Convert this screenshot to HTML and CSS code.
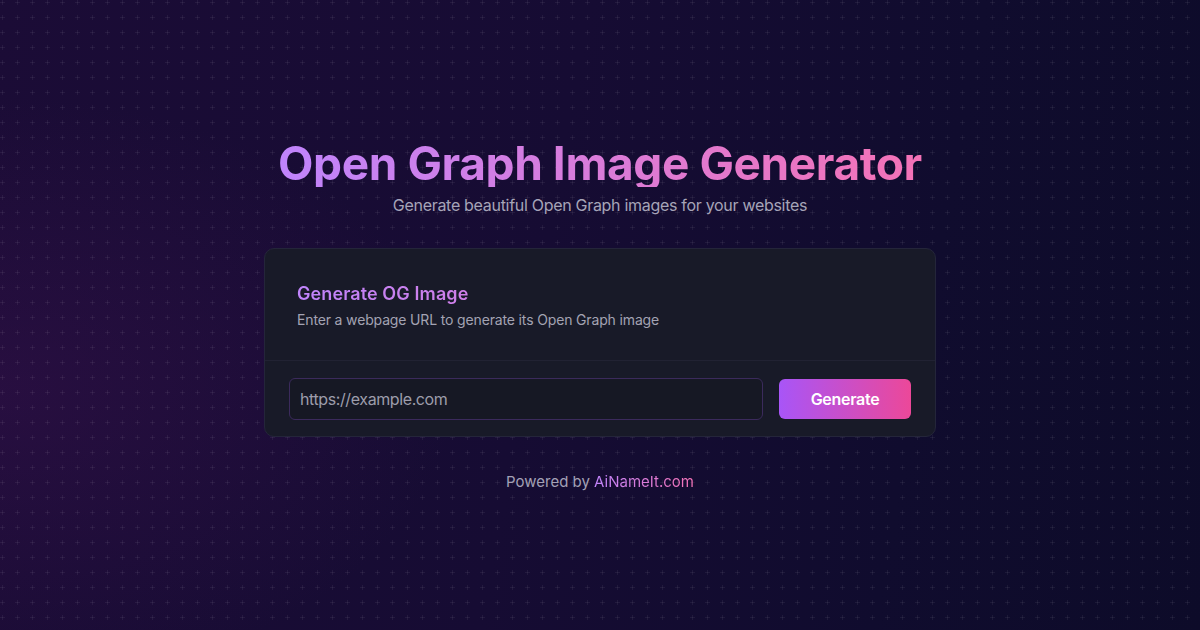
FILE: index.html
```html
<!DOCTYPE html>
<html lang="en">
<head>
<meta charset="utf-8">
<title>Open Graph Image Generator</title>
<link rel="stylesheet" href="styles.css">
</head>
<body>
<div class="bg">
  <main class="page">
    <h1 class="title">Open Graph Image Generator</h1>
    <p class="subtitle">Generate beautiful Open Graph images for your websites</p>
    <section class="card">
      <div class="card-head">
        <h2 class="card-title">Generate OG Image</h2>
        <p class="card-desc">Enter a webpage URL to generate its Open Graph image</p>
      </div>
      <form class="card-form">
        <input class="url-input" type="text" placeholder="https://example.com">
        <button class="btn" type="button">Generate</button>
      </form>
    </section>
    <p class="footer">Powered by <a class="footer-link" href="#">AiNameIt.com</a></p>
  </main>
</div>
</body>
</html>
```
FILE: styles.css
```css
* { box-sizing: border-box; }
html, body { margin: 0; padding: 0; }
body {
  width: 1200px;
  height: 630px;
  overflow: hidden;
  font-family: Inter, "Liberation Sans", sans-serif;
  background: #120c30;
}
.bg {
  width: 1200px;
  height: 630px;
  background-image:
    url("data:image/svg+xml,%3Csvg xmlns='http://www.w3.org/2000/svg' width='15' height='15'%3E%3Cpath d='M7.5 5v5M5 7.5h5' stroke='%23ffffff' stroke-opacity='0.06' stroke-width='1'/%3E%3C/svg%3E"),
    radial-gradient(ellipse 650px 420px at 0% 62%, rgba(60, 18, 80, 0.4), rgba(60, 18, 80, 0) 70%),
    linear-gradient(100deg, #1b0c36 0%, #160c33 45%, #100c2e 75%, #0d0b29 100%);
  background-position: -5px -5px, 0 0, 0 0;
  background-size: 15px 15px, 100% 100%, 100% 100%;
}
.page {
  width: 672px;
  margin: 0 auto;
  padding-top: 139px;
  display: flex;
  flex-direction: column;
  align-items: stretch;
}
.title {
  align-self: center;
  margin: 0;
  font-size: 46px;
  line-height: 48px;
  font-weight: 700;
  text-align: center;
  letter-spacing: -0.4px;
  white-space: nowrap;
  background: linear-gradient(90deg, #c084fc 0%, #f472b6 100%);
  -webkit-background-clip: text;
  background-clip: text;
  color: transparent;
}
.subtitle {
  margin: 6px 0 0;
  font-size: 16px;
  line-height: 24px;
  letter-spacing: -0.3px;
  color: #a6a4b8;
  text-align: center;
}
.card {
  margin-top: 31px;
  background: #181a28;
  border: 1px solid #24253a;
  border-radius: 10px;
}
.card-head {
  padding: 31px 32px 30px;
  border-bottom: 1px solid #212233;
}
.card-title {
  margin: 0;
  font-size: 18px;
  line-height: 28px;
  font-weight: 600;
  letter-spacing: 0.1px;
  background: linear-gradient(90deg, #c084fc 0%, #f472b6 100%);
  -webkit-background-clip: text;
  background-clip: text;
  color: transparent;
}
.card-desc {
  margin: 2px 0 0;
  font-size: 14px;
  line-height: 20px;
  letter-spacing: -0.15px;
  color: #a3a3b3;
}
.card-form {
  display: flex;
  gap: 16px;
  padding: 17px 24px 16px;
  margin: 0;
}
.url-input {
  flex: 1;
  height: 42px;
  background: #161824;
  border: 1px solid #3b2a5c;
  border-radius: 6px;
  padding: 0 10px;
  font-family: Inter, "Liberation Sans", sans-serif;
  font-size: 16px;
  letter-spacing: -0.4px;
  color: #e5e5ee;
  outline: none;
}
.url-input::placeholder { color: #9d9dab; }
.btn {
  width: 132px;
  height: 40px;
  margin-top: 1px;
  border: 0;
  border-radius: 6px;
  background: linear-gradient(90deg, #a855f7 0%, #ec4899 100%);
  color: #ffffff;
  font-family: Inter, "Liberation Sans", sans-serif;
  font-size: 16px;
  font-weight: 600;
  letter-spacing: -0.3px;
}
.footer {
  margin: 33px 0 0;
  font-size: 15px;
  line-height: 24px;
  text-align: center;
  color: #a3a1b6;
}
.footer-link {
  text-decoration: none;
  background: linear-gradient(90deg, #c084fc 0%, #f472b6 100%);
  -webkit-background-clip: text;
  background-clip: text;
  color: transparent;
}
```
